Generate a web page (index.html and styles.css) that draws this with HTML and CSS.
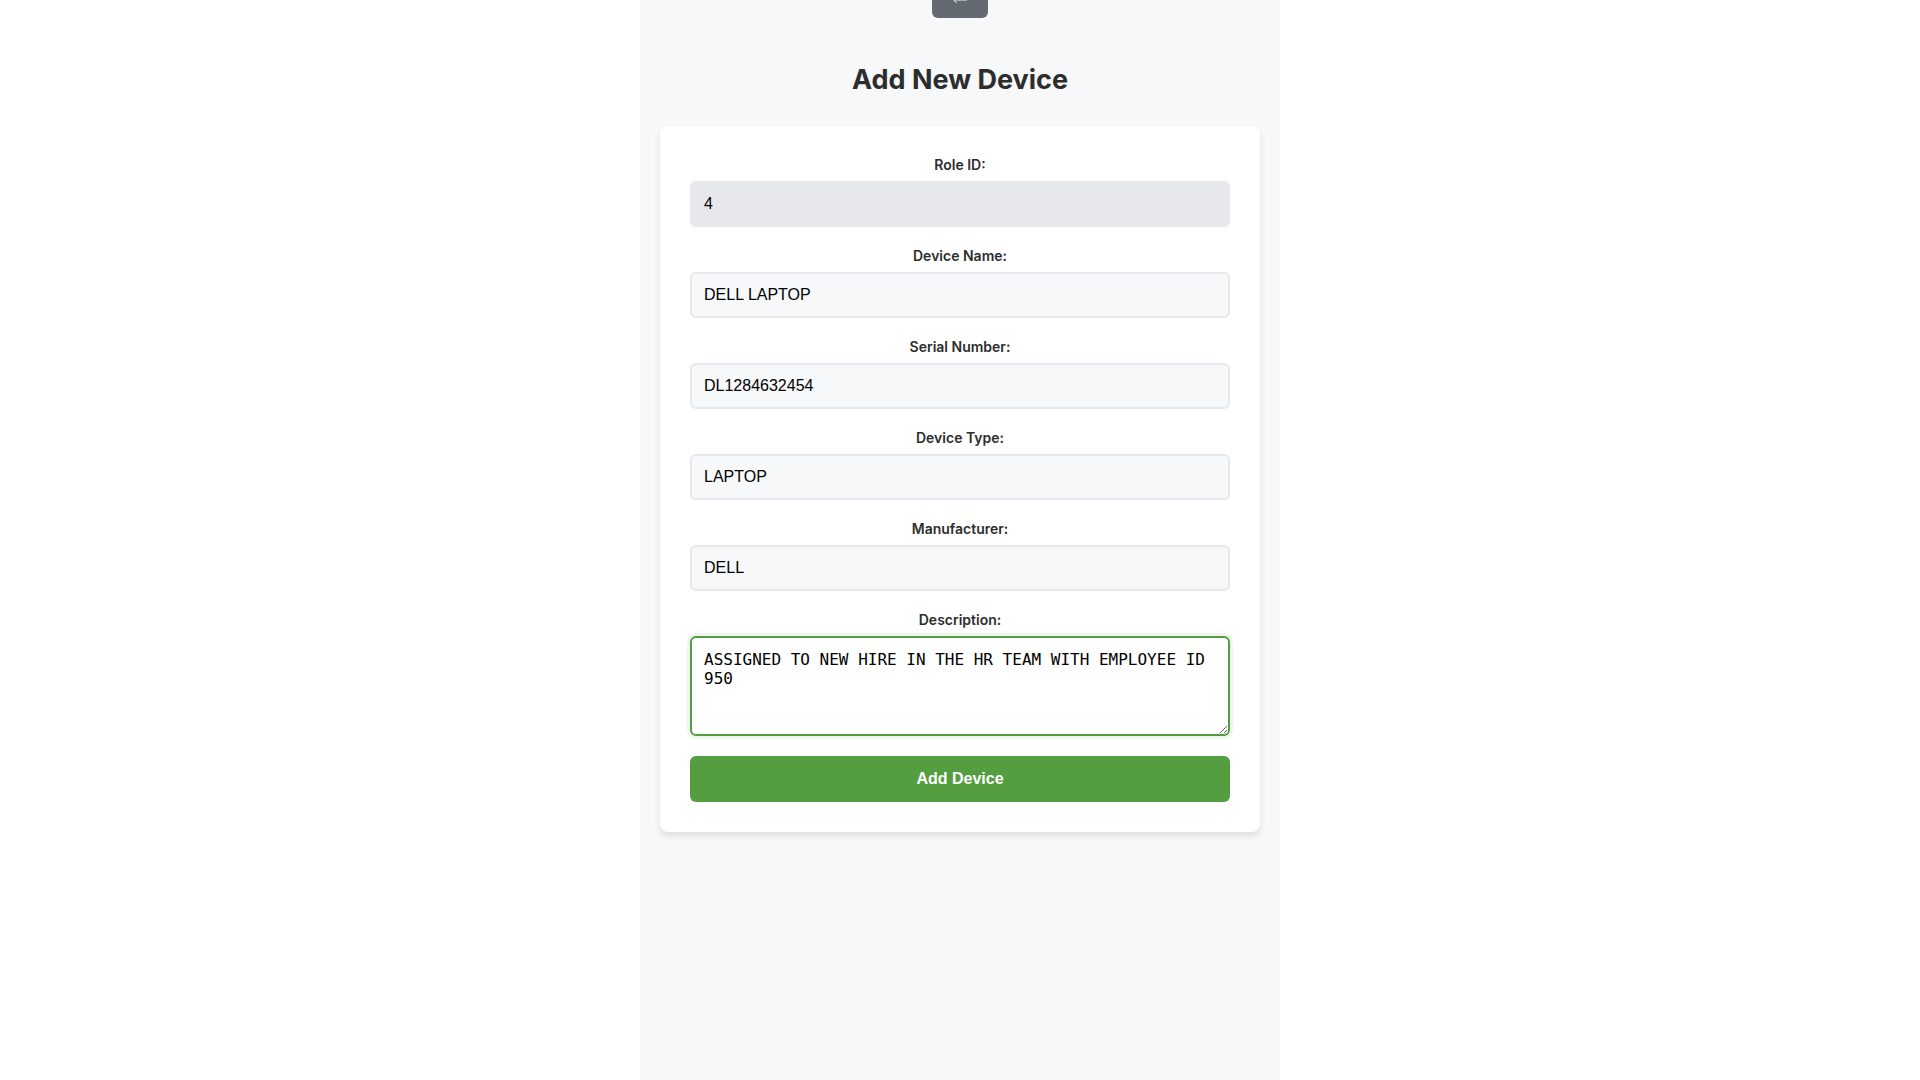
FILE: index.html
```html
<!DOCTYPE html>
<html lang="en">
<head>
<meta charset="utf-8">
<meta name="viewport" content="width=device-width, initial-scale=1">
<title>Add New Device</title>
<link rel="stylesheet" href="styles.css">
</head>
<body>
<main class="page">
  <div class="back-bar">
    <button class="back-button" type="button" aria-label="Back">
      <svg class="back-icon" viewBox="0 0 16 20" aria-hidden="true">
        <path d="M3 12.4H15" stroke="#fff" stroke-opacity=".5" stroke-width="1"/>
        <path d="M5.2 9.6 2 12.2 4.4 14.8" fill="none" stroke="#fff" stroke-width="1"/>
      </svg>
    </button>
  </div>
  <h1 class="title">Add New Device</h1>
  <form class="card">
    <div class="field">
      <label class="label" for="role">Role ID:</label>
      <input class="control control-readonly" id="role" type="text" value="4" readonly>
    </div>
    <div class="field">
      <label class="label" for="name">Device Name:</label>
      <input class="control" id="name" type="text" value="DELL LAPTOP">
    </div>
    <div class="field">
      <label class="label" for="serial">Serial Number:</label>
      <input class="control" id="serial" type="text" value="DL1284632454">
    </div>
    <div class="field">
      <label class="label" for="type">Device Type:</label>
      <input class="control" id="type" type="text" value="LAPTOP">
    </div>
    <div class="field">
      <label class="label" for="maker">Manufacturer:</label>
      <input class="control" id="maker" type="text" value="DELL">
    </div>
    <div class="field">
      <label class="label" for="description">Description:</label>
      <textarea class="control control-area control-active" id="description" spellcheck="false">ASSIGNED TO NEW HIRE IN THE HR TEAM WITH EMPLOYEE ID 950</textarea>
    </div>
    <button class="submit" type="submit">Add Device</button>
  </form>
</main>
</body>
</html>
```
FILE: styles.css
```css
* {
  box-sizing: border-box;
}

body {
  margin: 0;
  background: #fff;
  color: #2d2d2d;
  font-family: Inter, sans-serif;
}

.page {
  max-width: 640px;
  min-height: 100vh;
  margin: 0 auto;
  padding: 0 20px 20px;
  background: #f7f8fa;
}

.back-bar {
  display: flex;
  justify-content: center;
  align-items: flex-end;
  height: 18px;
  overflow: hidden;
}

.back-button {
  flex: none;
  padding: 10px 20px;
  border: 0;
  border-radius: 6px;
  background: #636a72;
}

.back-icon {
  display: block;
  width: 16px;
  height: 20px;
}

.title {
  margin: 44px 0 28px;
  font-size: 27px;
  line-height: 36px;
  font-weight: 700;
  text-align: center;
}

.card {
  display: flex;
  flex-direction: column;
  gap: 20px;
  padding: 30px;
  border-radius: 8px;
  background: #fff;
  box-shadow: 0 4px 6px rgba(0, 0, 0, 0.1);
}

.field {
  display: flex;
  flex-direction: column;
  gap: 8px;
}

.label {
  font-size: 14px;
  line-height: 17px;
  font-weight: 600;
  text-align: center;
}

.control {
  width: 100%;
  height: 46px;
  padding: 12px;
  border: 2px solid #e7e8ec;
  border-radius: 6px;
  outline: 0;
  background: #f7f8fa;
  color: #000;
  font: 16px/18px "Liberation Sans", Arial, sans-serif;
}

.control-readonly {
  background: #e7e8ec;
}

.control-area {
  display: block;
  height: 100px;
  font: 16px/19px "DejaVu Sans Mono", monospace;
  resize: vertical;
}

.control-active,
.control:focus {
  border-color: #549d40;
  background: #fff;
  box-shadow: 0 0 0 3px rgba(84, 157, 64, 0.1);
}

.submit {
  height: 46px;
  padding: 12px;
  border: 0;
  border-radius: 6px;
  background: #549d40;
  color: #fff;
  font: bold 16px/18px "Liberation Sans", Arial, sans-serif;
}
```
